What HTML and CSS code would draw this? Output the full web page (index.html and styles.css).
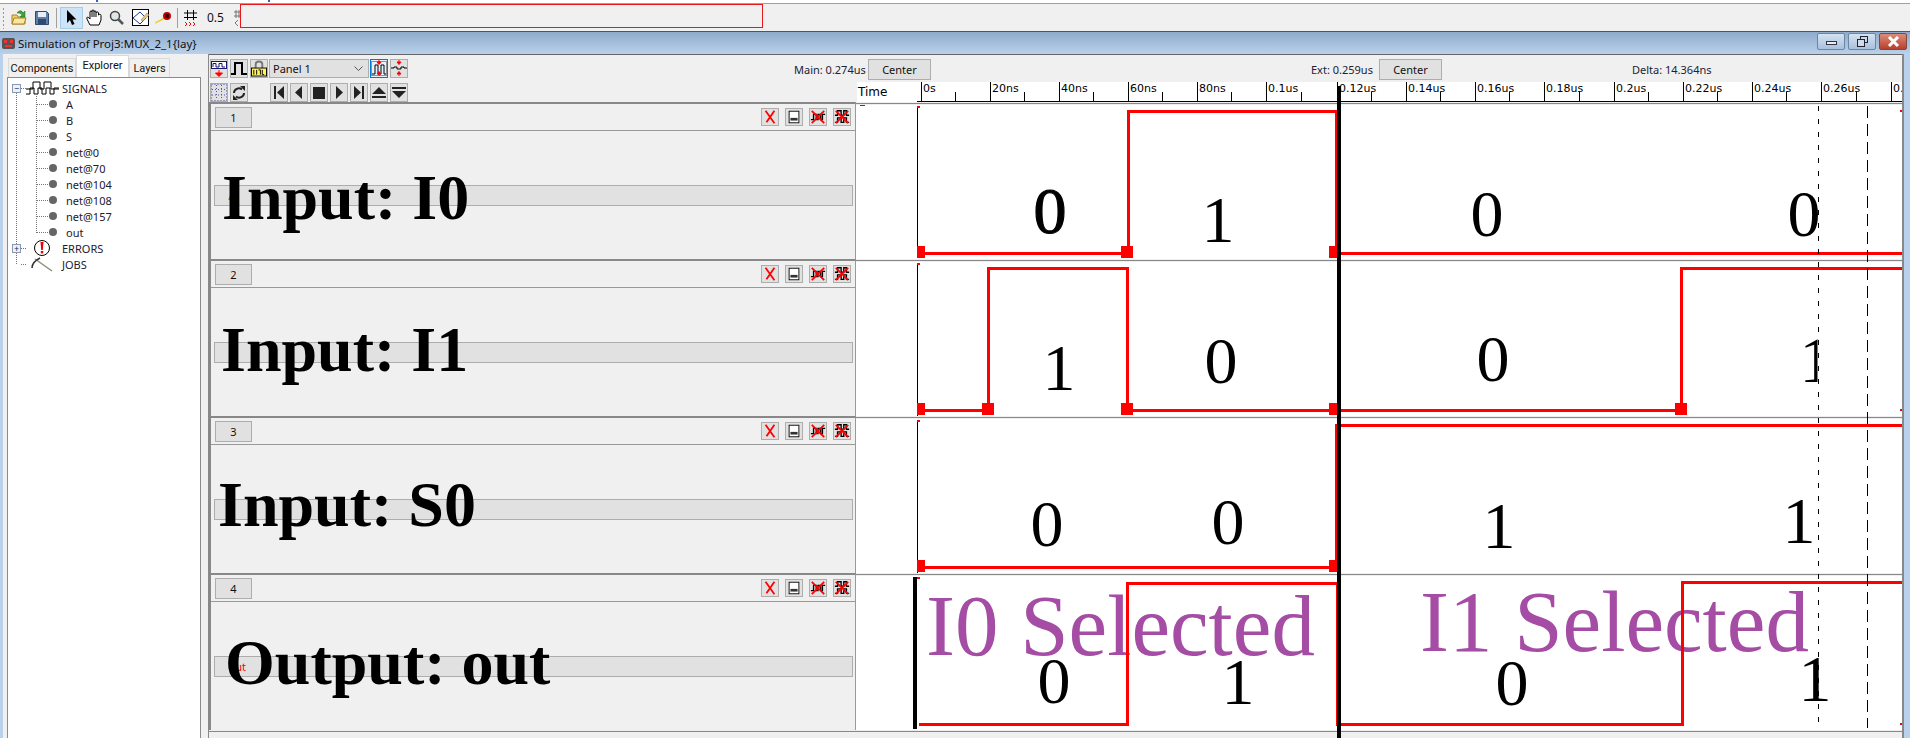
FILE: index.html
```html
<!DOCTYPE html>
<html lang="en">
<head>
    <meta charset="UTF-8">
    <title>Simulation of Proj3:MUX_2_1{lay}</title>
    <link rel="stylesheet" href="styles.css">
</head>
<body>
    <svg class="defs" width="0" height="0">
        <symbol id="i-close" viewBox="0 0 18 18">
            <path d="M4 2L14 16M14 2L5 15" fill="none" stroke="#f00" stroke-width="2"/>
        </symbol>
        <symbol id="i-min" viewBox="0 0 18 18">
            <rect x="3.500" y="2.500" width="11" height="13" fill="#fff" stroke="#000"/>
            <rect x="5" y="10" width="8" height="3" fill="#333"/>
        </symbol>
        <symbol id="i-hide" viewBox="0 0 18 18">
            <path d="M1 12H4V6H7V12H9V6H12V12H14V6H17" fill="none" stroke="#000" stroke-width="1.500"/>
            <path d="M2 2L16 16M16 2L2 16" fill="none" stroke="#f00" stroke-width="2"/>
        </symbol>
        <symbol id="i-hideall" viewBox="0 0 18 18">
            <path d="M1 7H4V2H8V7H11V2H14V7H17M1 15H4V10H8V15H11V10H14V15H17" fill="none" stroke="#000" stroke-width="1.500"/>
            <path d="M2 2L16 16M16 2L2 16" fill="none" stroke="#f00" stroke-width="2"/>
        </symbol>
    </svg>

    <div class="topstrip"><i></i><i></i></div>

    <div class="toolbar">
        <span class="gripper"></span>
        <svg class="t-open" width="16" height="17" viewBox="0 0 16 17">
            <path d="M1 6H6L7 8H14V15H1Z" fill="#f3d26b" stroke="#a8832c"/>
            <path d="M1 15L3 9H15L13 15Z" fill="#fbe79b" stroke="#a8832c"/>
            <path d="M6 4C8 1 11 1 12 4L14 2V8H9L11 6C10 4 8 4 6 4Z" fill="#3aa535" stroke="#1c6e1c" stroke-width=".5"/>
        </svg>
        <svg class="t-save" width="14" height="15" viewBox="0 0 14 15">
            <path d="M.5 1.500H11.500L13.500 3.500V14.500H.5Z" fill="#5f7fa6" stroke="#2f4a70"/>
            <rect x="3" y="2" width="8" height="5" fill="#e8eef5"/>
            <rect x="3" y="9" width="8" height="5" fill="#2f4a70"/>
        </svg>
        <span class="sep t-sep1"></span>
        <span class="t-arrow">
            <svg width="11" height="16" viewBox="0 0 11 16">
                <path d="M1 0V13L4 10L6 15L8.500 14L6.500 9.500H10.500Z"/>
            </svg>
        </span>
        <svg class="t-hand" width="16" height="17" viewBox="0 0 16 17">
            <path d="M4 16L1 10C0 8 2 7.500 3 9L4 10V3C4 1.500 6 1.500 6 3V2C6 .5 8 .5 8 2V3C8 1.500 10 1.500 10 3V4C10 2.500 12.500 2.500 12.500 4V6C13 5 15 5 15 6.500V11L13 16Z" fill="#fff" stroke="#000"/>
            <path d="M6 3V8M8 3V8M10 4V8" stroke="#000"/>
        </svg>
        <svg class="t-zoom" width="15" height="15" viewBox="0 0 15 15">
            <circle cx="6" cy="6" r="4.500" fill="#dfe6ea" stroke="#444" stroke-width="1.500"/>
            <path d="M9.500 9.500L14 14" stroke="#555" stroke-width="2.500"/>
        </svg>
        <svg class="t-area" width="17" height="17" viewBox="0 0 17 17">
            <rect x=".5" y=".5" width="16" height="16" fill="#fff" stroke="#000"/>
            <path d="M1 9L8 3L14 9L8 15Z" fill="none" stroke="#1a3a9a"/>
            <path d="M9 11L15 4L17 6L11 12Z" fill="#e8c98a" stroke="#8a6a2c" stroke-width=".5"/>
        </svg>
        <svg class="t-probe" width="17" height="13" viewBox="0 0 17 13">
            <path d="M0 12L10 7" stroke="#e6d230" stroke-width="1.500"/>
            <circle cx="12" cy="5" r="4" fill="#c00"/>
            <circle cx="12" cy="5" r="2.200" fill="#300"/>
        </svg>
        <span class="sep t-sep2"></span>
        <svg class="t-grid" width="13" height="16" viewBox="0 0 13 16">
            <path d="M3.500 0V10M9.500 0V10M0 3H13M0 7.500H13" stroke="#000"/>
            <path d="M1 12L3 14L1 16M5 12L7 14L5 16M9 12L11 14L9 16" fill="none" stroke="#f00"/>
        </svg>
        <span class="t-scale">0.5</span>
        <svg class="t-mini" width="6" height="16" viewBox="0 0 6 16">
            <path d="M2 0V8M5 0V8M0 2H6M0 6H6" stroke="#777"/>
            <path d="M4 10L1 13L4 16" fill="none" stroke="#777"/>
        </svg>
        <div class="red-box"></div>
    </div>

    <div class="window">
        <div class="titlebar">
            <svg class="app-icon" width="13" height="11" viewBox="0 0 13 11">
                <rect width="13" height="11" rx="2" fill="#555"/>
                <rect x="2" y="2" width="3" height="3" fill="#e33"/>
                <rect x="8" y="2" width="3" height="3" fill="#e33"/>
                <rect x="3" y="7" width="7" height="2" fill="#e33"/>
            </svg>
            <span class="title-text">Simulation of Proj3:MUX_2_1{lay}</span>
            <div class="win-buttons">
                <span class="win-btn"><i class="glyph-min"></i></span>
                <span class="win-btn">
                    <svg width="11" height="11" viewBox="0 0 11 11">
                        <rect x="3.500" y=".5" width="7" height="6" fill="none" stroke="#223"/>
                        <rect x=".5" y="3.500" width="7" height="7" fill="#cfdbea" stroke="#223"/>
                    </svg>
                </span>
                <span class="win-btn win-close">
                    <svg width="13" height="11" viewBox="0 0 13 11">
                        <path d="M2 1L11 10M11 1L2 10" stroke="#fff" stroke-width="3"/>
                    </svg>
                </span>
            </div>
        </div>

        <div class="window-body">
            <div class="sidepanel">
                <div class="tabs">
                    <span class="tab tab-components">Components</span>
                    <span class="tab tab-explorer active">Explorer</span>
                    <span class="tab tab-layers">Layers</span>
                </div>
                <div class="tree">
                    <span class="trunk"></span>
                    <span class="branch"></span>
                    <div class="node root">
                        <span class="expander">&minus;</span>
                        <span class="stub"></span>
                        <svg class="wave-icon" width="33" height="14" viewBox="0 0 33 14">
                            <path d="M0 8H7V1H14V8H18V1H25V8H33M0 13H4V7H8V13H12V7H16V13H20V7H24V13H28V7H33" fill="none" stroke="#000"/>
                        </svg>
                        <span>SIGNALS</span>
                    </div>
                    <div class="node leaf"><span class="stub"></span><span class="dot"></span><span>A</span></div>
                    <div class="node leaf"><span class="stub"></span><span class="dot"></span><span>B</span></div>
                    <div class="node leaf"><span class="stub"></span><span class="dot"></span><span>S</span></div>
                    <div class="node leaf"><span class="stub"></span><span class="dot"></span><span>net@0</span></div>
                    <div class="node leaf"><span class="stub"></span><span class="dot"></span><span>net@70</span></div>
                    <div class="node leaf"><span class="stub"></span><span class="dot"></span><span>net@104</span></div>
                    <div class="node leaf"><span class="stub"></span><span class="dot"></span><span>net@108</span></div>
                    <div class="node leaf"><span class="stub"></span><span class="dot"></span><span>net@157</span></div>
                    <div class="node leaf"><span class="stub"></span><span class="dot"></span><span>out</span></div>
                    <div class="node root">
                        <span class="expander">+</span>
                        <span class="stub"></span>
                        <svg class="errors-icon" width="33" height="16" viewBox="0 0 33 16">
                            <circle cx="16" cy="8" r="7.500" fill="#fff" stroke="#000"/>
                            <path d="M14.500 2H17.500L16.800 10H15.200Z" fill="#e00"/>
                            <rect x="14.800" y="11" width="2.400" height="2.400" fill="#e00"/>
                        </svg>
                        <span>ERRORS</span>
                    </div>
                    <div class="node root">
                        <span class="expander blank"></span>
                        <span class="stub"></span>
                        <svg class="errors-icon" width="33" height="15" viewBox="0 0 33 15">
                            <path d="M9 2L26 14" stroke="#8a8f78" stroke-width="1.500"/>
                            <path d="M6 11C6 7 10 3 14 1" fill="none" stroke="#333" stroke-width="1.500"/>
                        </svg>
                        <span>JOBS</span>
                    </div>
                </div>
            </div>

            <div class="wavewin">
                <div class="ctl-row ctl-top">
                    <span class="tbtn">
                        <svg width="16" height="17" viewBox="0 0 16 17">
                            <rect x=".5" y="1.500" width="15" height="7" fill="#fff" stroke="#14147a"/>
                            <path d="M2 7V3.500H5V7H8V3.500H11V7H14" fill="none" stroke="#14147a"/>
                            <path d="M8 10V13M4.500 13H11.500L8 16.500Z" fill="#f00" stroke="#f00"/>
                        </svg>
                    </span>
                    <span class="tbtn">
                        <svg width="16" height="15" viewBox="0 0 16 15">
                            <path d="M0 13H4V2H11V13H16" fill="none" stroke="#000" stroke-width="2"/>
                        </svg>
                    </span>
                    <span class="tbtn">
                        <svg width="17" height="17" viewBox="0 0 17 17">
                            <path d="M5 8V4C5 0 12 0 12 4V8" fill="none" stroke="#777" stroke-width="2"/>
                            <rect x=".5" y="8" width="16" height="8.500" fill="#fff25a" stroke="#000"/>
                            <path d="M3 10V15M6 10V15M8 10H10V15M12 10V15H14" fill="none" stroke="#000"/>
                        </svg>
                    </span>
                    <span class="panel-select">Panel 1
                        <svg width="9" height="5" viewBox="0 0 9 5"><path d="M.5 .5L4.500 4.500L8.500 .5" fill="none" stroke="#555"/></svg>
                    </span>
                    <span class="tbtn selected">
                        <svg width="16" height="17" viewBox="0 0 16 17">
                            <rect x=".5" y="1.500" width="15" height="14" fill="none" stroke="#333" stroke-dasharray="1 1"/>
                            <path d="M1 14H4V5H7V14H10V5H13V14H15" fill="none" stroke="#000"/>
                            <path d="M8 0V2M6 2H10L8 4.500ZM8 16V14M6 14H10L8 11.500Z" fill="#f00" stroke="#f00"/>
                        </svg>
                    </span>
                    <span class="tbtn">
                        <svg width="16" height="17" viewBox="0 0 16 17">
                            <path d="M0 8H3V7H6V9H10V7H13V8H16" fill="none" stroke="#000"/>
                            <path d="M8 0V2M6 2H10L8 4.500ZM8 16V14M6 14H10L8 11.500Z" fill="#f00" stroke="#f00"/>
                        </svg>
                    </span>

                    <span class="readout readout-main">Main: 0.274us</span>
                    <span class="center-btn">Center</span>
                    <span class="readout readout-ext">Ext: 0.259us</span>
                    <span class="center-btn">Center</span>
                    <span class="readout readout-delta">Delta: 14.364ns</span>
                </div>

                <div class="ctl-row ctl-bottom">
                    <div class="ctl-buttons">
                        <span class="tbtn">
                            <svg width="16" height="17" viewBox="0 0 16 17">
                                <path d="M.5 .5H15.500V16.500H.5ZM5.500 1V16M10.500 1V16M1 5.500H15M1 11H15" fill="none" stroke="#3030a0" stroke-width=".8" stroke-dasharray="1 2"/>
                            </svg>
                        </span>
                        <span class="tbtn">
                            <svg width="14" height="14" viewBox="0 0 14 14">
                                <path d="M2 7C2 3 7 1 10 3.500M12 7C12 11 7 13 4 10.500" fill="none" stroke="#222" stroke-width="2"/>
                                <path d="M8 0H13V5ZM6 14H1V9Z" fill="#222"/>
                            </svg>
                        </span>
                        <span class="tbtn t-first">
                            <svg width="12" height="13" viewBox="0 0 12 13"><path d="M1 0H3V13H1ZM11 0V13L4 6.500Z" fill="#222"/></svg>
                        </span>
                        <span class="tbtn">
                            <svg width="12" height="13" viewBox="0 0 12 13"><path d="M9 0V13L2 6.500Z" fill="#222"/></svg>
                        </span>
                        <span class="tbtn">
                            <svg width="12" height="12" viewBox="0 0 12 12"><rect width="12" height="12" fill="#222"/></svg>
                        </span>
                        <span class="tbtn">
                            <svg width="12" height="13" viewBox="0 0 12 13"><path d="M3 0V13L10 6.500Z" fill="#222"/></svg>
                        </span>
                        <span class="tbtn">
                            <svg width="12" height="13" viewBox="0 0 12 13"><path d="M9 0H11V13H9ZM1 0V13L8 6.500Z" fill="#222"/></svg>
                        </span>
                        <span class="tbtn">
                            <svg width="14" height="11" viewBox="0 0 14 11"><path d="M7 0L14 7H0ZM0 9H14V11H0Z" fill="#222"/></svg>
                        </span>
                        <span class="tbtn">
                            <svg width="14" height="11" viewBox="0 0 14 11"><path d="M7 11L14 4H0ZM0 0H14V2H0Z" fill="#222"/></svg>
                        </span>
                    </div>
                    <svg class="ruler" width="1045" height="20" viewBox="857 82 1045 20">
                        <text class="ruler-time" x="858" y="96">Time</text>
                        <path class="ruler-ticks" d="M917 101.500H1902M921.500 82V101M990.500 82V101M1059.500 82V101M1128.500 82V101M1197.500 82V101M1266.500 82V101M1337.500 82V101M1406.500 82V101M1475.500 82V101M1544.500 82V101M1614.500 82V101M1683.500 82V101M1752.500 82V101M1821.500 82V101M1891.500 82V101M955.500 92V101M1024.500 92V101M1093.500 92V101M1162.500 92V101M1231.500 92V101M1301.500 92V101M1371.500 92V101M1440.500 92V101M1509.500 92V101M1579.500 92V101M1648.500 92V101M1717.500 92V101M1786.500 92V101M1856.500 92V101"/>
                        <text x="923" y="92">0s</text>
                        <text x="992" y="92">20ns</text>
                        <text x="1061" y="92">40ns</text>
                        <text x="1130" y="92">60ns</text>
                        <text x="1199" y="92">80ns</text>
                        <text x="1268" y="92">0.1us</text>
                        <text x="1339" y="92">0.12us</text>
                        <text x="1408" y="92">0.14us</text>
                        <text x="1477" y="92">0.16us</text>
                        <text x="1546" y="92">0.18us</text>
                        <text x="1616" y="92">0.2us</text>
                        <text x="1685" y="92">0.22us</text>
                        <text x="1754" y="92">0.24us</text>
                        <text x="1823" y="92">0.26us</text>
                        <text x="1893" y="92">0.28us</text>
                    </svg>
                </div>

                <!-- panel 1 -->
                <div class="row">
                    <div class="row-head">
                        <div class="head-bar">
                            <span class="num-btn">1</span>
                            <div class="head-icons">
                                <svg class="hicon" width="18" height="18"><use href="#i-close"/></svg>
                                <svg class="hicon" width="18" height="18"><use href="#i-min"/></svg>
                                <svg class="hicon" width="18" height="18"><use href="#i-hide"/></svg>
                                <svg class="hicon" width="18" height="18"><use href="#i-hideall"/></svg>
                            </div>
                        </div>
                        <div class="head-body">
                            <div class="sig-bar">A</div>
                            <div class="big-label big-1">Input: I0</div>
                        </div>
                    </div>
                    <div class="row-wave">
                        <svg class="wave" width="1046" height="154" viewBox="856 105 1046 154">
                            <rect class="axis" x="917" y="106" width="1" height="152"/>
                            <rect class="red" x="917" y="106" width="3" height="2"/>
                            <rect class="axis-tick" x="860" y="105" width="5" height="1"/>
                            <path class="trace" d="M921 253H1128V111H1336V253M1336 253H1902"/>
                            <rect class="red" x="917" y="246" width="8" height="12"/>
                            <rect class="red" x="1121" y="246" width="12" height="12"/>
                            <rect class="red" x="1329" y="246" width="12" height="12"/>
                            <rect class="red" x="1900" y="110" width="2" height="2"/>
                            <text class="val val-double" x="1050" y="233">0</text>
                            <text class="val" x="1218" y="242">1</text>
                            <text class="val" x="1487" y="236">0</text>
                            <text class="val" x="1804" y="236">0</text>
                        </svg>
                    </div>
                </div>

                <!-- panel 2 -->
                <div class="row">
                    <div class="row-head">
                        <div class="head-bar">
                            <span class="num-btn">2</span>
                            <div class="head-icons">
                                <svg class="hicon" width="18" height="18"><use href="#i-close"/></svg>
                                <svg class="hicon" width="18" height="18"><use href="#i-min"/></svg>
                                <svg class="hicon" width="18" height="18"><use href="#i-hide"/></svg>
                                <svg class="hicon" width="18" height="18"><use href="#i-hideall"/></svg>
                            </div>
                        </div>
                        <div class="head-body">
                            <div class="sig-bar">B</div>
                            <div class="big-label big-2">Input: I1</div>
                        </div>
                    </div>
                    <div class="row-wave">
                        <svg class="wave" width="1046" height="154" viewBox="856 262 1046 154">
                            <rect class="axis" x="917" y="263" width="1" height="153"/>
                            <rect class="red" x="917" y="263" width="3" height="2"/>
                            <path class="trace" d="M921 410H988V268H1127V410H1681V268H1902"/>
                            <rect class="red" x="917" y="403" width="8" height="12"/>
                            <rect class="red" x="982" y="403" width="12" height="12"/>
                            <rect class="red" x="1121" y="403" width="12" height="12"/>
                            <rect class="red" x="1329" y="403" width="12" height="12"/>
                            <rect class="red" x="1675" y="403" width="12" height="12"/>
                            <rect class="red" x="1900" y="409" width="2" height="2"/>
                            <text class="val" x="1059" y="390">1</text>
                            <text class="val" x="1221" y="383">0</text>
                            <text class="val" x="1493" y="381">0</text>
                            <text class="val val-cut" x="1816" y="382">1</text>
                        </svg>
                    </div>
                </div>

                <!-- panel 3 -->
                <div class="row">
                    <div class="row-head">
                        <div class="head-bar">
                            <span class="num-btn">3</span>
                            <div class="head-icons">
                                <svg class="hicon" width="18" height="18"><use href="#i-close"/></svg>
                                <svg class="hicon" width="18" height="18"><use href="#i-min"/></svg>
                                <svg class="hicon" width="18" height="18"><use href="#i-hide"/></svg>
                                <svg class="hicon" width="18" height="18"><use href="#i-hideall"/></svg>
                            </div>
                        </div>
                        <div class="head-body">
                            <div class="sig-bar">S</div>
                            <div class="big-label big-3">Input: S0</div>
                        </div>
                    </div>
                    <div class="row-wave">
                        <svg class="wave" width="1046" height="154" viewBox="856 419 1046 154">
                            <rect class="axis" x="917" y="420" width="1" height="153"/>
                            <rect class="red" x="917" y="420" width="3" height="2"/>
                            <path class="trace" d="M921 567H1336V425H1902"/>
                            <rect class="red" x="917" y="560" width="8" height="12"/>
                            <rect class="red" x="1329" y="560" width="12" height="12"/>
                            <text class="val" x="1047" y="546">0</text>
                            <text class="val" x="1228" y="544">0</text>
                            <text class="val" x="1499" y="548">1</text>
                            <text class="val" x="1799" y="543">1</text>
                        </svg>
                    </div>
                </div>

                <!-- panel 4 -->
                <div class="row">
                    <div class="row-head">
                        <div class="head-bar">
                            <span class="num-btn">4</span>
                            <div class="head-icons">
                                <svg class="hicon" width="18" height="18"><use href="#i-close"/></svg>
                                <svg class="hicon" width="18" height="18"><use href="#i-min"/></svg>
                                <svg class="hicon" width="18" height="18"><use href="#i-hide"/></svg>
                                <svg class="hicon" width="18" height="18"><use href="#i-hideall"/></svg>
                            </div>
                        </div>
                        <div class="head-body">
                            <div class="sig-bar">out</div>
                            <div class="big-label big-4">Output: out</div>
                        </div>
                    </div>
                    <div class="row-wave">
                        <svg class="wave" width="1046" height="154" viewBox="856 576 1046 154">
                            <rect class="axis" x="913" y="577" width="4" height="152"/>
                            <rect class="red" x="917" y="577" width="3" height="2"/>
                            <text class="note" x="926" y="655">I0 Selected</text>
                            <text class="note" x="1420" y="651">I1 Selected</text>
                            <path class="trace" d="M919 724H1127V583H1337V724H1682V582H1902"/>
                            <rect class="red" x="1900" y="723" width="2" height="2"/>
                            <text class="val" x="1054" y="703">0</text>
                            <text class="val" x="1238" y="704">1</text>
                            <text class="val" x="1512" y="705">0</text>
                            <text class="val" x="1815" y="701">1</text>
                        </svg>
                    </div>
                </div>

                <div class="rows-end"></div>

                <!-- cursors run across all the panels -->
                <svg class="cursors" width="1046" height="684" viewBox="856 54 1046 684">
                    <rect x="1337" y="86" width="4" height="652"/>
                    <path class="cursor-ext" d="M1818.500 106V728"/>
                    <path class="cursor-main" d="M1867.500 106V728"/>
                </svg>
            </div>
        </div>
    </div>
</body>
</html>
```

FILE: styles.css
```css
/* Basic Reset */
* {
    margin: 0;
    padding: 0;
    box-sizing: border-box;
}

body {
    width: 1910px;
    height: 738px;
    overflow: hidden;
    display: flex;
    flex-direction: column;
    background-color: #f0f0f0;
    color: #111;
    font-family: "Noto Sans", sans-serif;
    font-size: 11px;
}

.defs {
    position: absolute;
}

/* Top strip */
.topstrip {
    height: 4px;
    flex: none;
    display: flex;
    background-color: #fff;
    border-bottom: 1px solid #a0a0a0;
}

.topstrip i {
    width: 2px;
    height: 2px;
    margin-left: 96px;
    background-color: #3a5fc8;
}

.topstrip i + i {
    margin-left: 170px;
}

/* Main toolbar */
.toolbar {
    position: relative;
    height: 27px;
    flex: none;
    display: flex;
    align-items: center;
    padding-left: 2px;
    background-color: #f0f0f0;
}

.gripper {
    width: 3px;
    height: 22px;
    background-image: radial-gradient(#999 40%, transparent 45%);
    background-size: 3px 4px;
}

.sep {
    width: 1px;
    height: 20px;
    background-color: #a0a0a0;
}

.t-open { margin-left: 6px; }
.t-save { margin-left: 8px; }
.t-sep1 { margin-left: 7px; }
.t-hand { margin-left: 3px; }
.t-zoom { margin-left: 7px; }
.t-area { margin-left: 8px; }
.t-probe { margin-left: 6px; }
.t-sep2 { margin-left: 5px; }
.t-grid { margin-left: 6px; }
.t-mini { margin-left: 10px; }

.t-arrow {
    width: 23px;
    height: 22px;
    margin-left: 3px;
    display: flex;
    align-items: center;
    justify-content: center;
    background-color: #cce4f7;
    border: 1px solid #a5cde8;
}

.t-scale {
    width: 17px;
    margin-left: 10px;
    font-size: 12px;
}

.red-box {
    position: absolute;
    left: 240px;
    top: 0;
    width: 523px;
    height: 24px;
    border: 1px solid #e8191c;
    background-color: #f0f0f0;
}

/* Window frame */
.window {
    flex: 1;
    min-height: 0;
    display: flex;
    flex-direction: column;
    background-color: #b9d1ea;
}

.titlebar {
    height: 23px;
    flex: none;
    display: flex;
    align-items: center;
    padding: 0 3px 0 2px;
    border-top: 1px solid #555;
    background: linear-gradient(to bottom, #8fabcc, #b9d1ea);
}

.title-text {
    margin-left: 3px;
    font-size: 11.500px;
}

.win-buttons {
    margin-left: auto;
    margin-bottom: 3px;
    display: flex;
    gap: 3px;
}

.win-btn {
    width: 28px;
    height: 17px;
    display: flex;
    align-items: center;
    justify-content: center;
    border: 1px solid #6b85a3;
    border-radius: 2px;
    background: linear-gradient(to bottom, #d5e2f0, #a9c1dc);
}

.win-close {
    background: linear-gradient(to bottom, #dc8c7a, #b8402c);
    border-color: #7d4a42;
}

.glyph-min {
    width: 11px;
    height: 4px;
    margin-top: 3px;
    background-color: #e8eef5;
    border: 1px solid #334;
}

.window-body {
    flex: 1;
    min-height: 0;
    display: flex;
    margin: 0 6px 0 3px;
    background-color: #f0f0f0;
}

/* Explorer side panel */
.sidepanel {
    width: 205px;
    flex: none;
    display: flex;
    flex-direction: column;
    padding-left: 4px;
}

.tabs {
    height: 23px;
    flex: none;
    display: flex;
    align-items: flex-end;
    padding-left: 1px;
    font-family: Roboto, sans-serif;
}

.tab {
    height: 19px;
    padding-top: 3px;
    text-align: center;
    background-color: #f0f0f0;
    border: 1px solid #d9d9d9;
    border-bottom: none;
    white-space: nowrap;
}

.tab-components { width: 68px; }
.tab-explorer { width: 53px; }
.tab-layers { width: 41px; }

.tab.active {
    height: 22px;
    padding-top: 3px;
    background-color: #fff;
}

.tree {
    position: relative;
    flex: 1;
    width: 194px;
    padding-top: 2px;
    background-color: #fff;
    border: 1px solid #8a8a8a;
    border-bottom: none;
}

.trunk {
    position: absolute;
    left: 8px;
    top: 14px;
    height: 172px;
    border-left: 1px dotted #777;
}

.branch {
    position: absolute;
    left: 28px;
    top: 18px;
    height: 137px;
    border-left: 1px dotted #777;
}

.node {
    height: 16px;
    display: flex;
    align-items: center;
    color: #1a2030;
    white-space: nowrap;
}

.root {
    padding-left: 4px;
}

.expander {
    position: relative;
    width: 9px;
    height: 9px;
    display: flex;
    align-items: center;
    justify-content: center;
    background-color: #eef2f8;
    border: 1px solid #8a9ab0;
    color: #203060;
    font-size: 9px;
    line-height: 1;
}

.expander.blank {
    visibility: hidden;
}

.root .stub {
    width: 5px;
    margin-left: 0;
}

.stub {
    border-top: 1px dotted #777;
}

.wave-icon {
    margin-right: 3px;
}

.errors-icon {
    margin-right: 3px;
}

.leaf {
    padding-left: 28px;
}

.leaf .stub {
    width: 12px;
}

.dot {
    width: 8px;
    height: 8px;
    margin: 0 9px 0 1px;
    border-radius: 50%;
    background-color: #666;
}

/* Waveform window */
.wavewin {
    position: relative;
    width: 1696px;
    flex: none;
    border-left: 1px solid #888;
    border-right: 2px solid #888;
}

.ctl-row {
    display: flex;
}

.ctl-top {
    height: 28px;
    padding: 4px 0 0 1px;
    border-top: 1px solid #666;
}

.ctl-bottom {
    height: 20px;
}

.ctl-buttons {
    width: 648px;
    display: flex;
    align-items: flex-start;
    gap: 2px;
    padding: 1px 0 0 1px;
}

.t-first {
    margin-left: 20px;
}

.tbtn {
    width: 18px;
    height: 19px;
    flex: none;
    margin-right: 2px;
    display: flex;
    align-items: center;
    justify-content: center;
    background-color: #e1e1e1;
    border: 1px solid #adadad;
}

.ctl-buttons .tbtn {
    margin-right: 0;
}

.tbtn.selected {
    background-color: #e5f1fb;
    border-color: #0078d7;
}

.panel-select {
    width: 100px;
    height: 19px;
    flex: none;
    margin: 0 1px 0 -1px;
    display: flex;
    align-items: center;
    justify-content: space-between;
    padding: 0 5px 0 3px;
    background-color: #e1e1e1;
    border: 1px solid #adadad;
}

.readout {
    height: 21px;
    flex: none;
    display: flex;
    align-items: center;
    white-space: nowrap;
    color: #223;
}

.readout-main {
    width: 74px;
    margin-left: 384px;
}

.readout-ext {
    width: 68px;
    margin-left: 380px;
}

.readout-delta {
    margin-left: 190px;
}

.center-btn {
    width: 63px;
    height: 21px;
    flex: none;
    display: flex;
    align-items: center;
    justify-content: center;
    background-color: #e1e1e1;
    border: 1px solid #adadad;
}

.ruler {
    display: block;
    background-color: #fff;
    font-family: "DejaVu Sans", sans-serif;
    font-size: 11px;
}

.ruler-time {
    font-size: 12px;
}

.ruler-ticks {
    fill: none;
    stroke: #000;
    stroke-width: 1;
}

/* Panels */
.row {
    height: 157px;
    display: flex;
}

.row-head {
    width: 647px;
    flex: none;
    display: flex;
    flex-direction: column;
    border-top: 2px solid #888;
    border-left: 2px solid #888;
    border-right: 1px solid #999;
}

.head-bar {
    height: 27px;
    flex: none;
    display: flex;
    align-items: center;
    justify-content: space-between;
    padding: 0 4px 0 4px;
    border-bottom: 1px solid #999;
}

.num-btn {
    width: 37px;
    height: 21px;
    display: flex;
    align-items: center;
    justify-content: center;
    background-color: #e1e1e1;
    border: 1px solid #adadad;
}

.head-icons {
    display: flex;
    gap: 6px;
}

.hicon {
    display: block;
    background-color: #e1e1e1;
    border: 1px solid #adadad;
}

.head-body {
    position: relative;
    flex: 1;
    display: flex;
    align-items: center;
    justify-content: center;
}

.sig-bar {
    width: 639px;
    height: 21px;
    display: flex;
    align-items: center;
    padding-left: 14px;
    background-color: #e1e1e1;
    border: 1px solid #adadad;
    color: #f00;
}

/* big labels sit on top of the signal bars */
.big-label {
    position: absolute;
    font-family: "Liberation Serif", serif;
    font-size: 64px;
    font-weight: bold;
    line-height: 64px;
    color: #000;
    white-space: nowrap;
}

.big-1 { left: 11px; top: 35px; }
.big-2 { left: 10px; top: 30px; }
.big-3 { left: 7px; top: 28px; }
.big-4 { left: 14px; top: 29px; }

.row-wave {
    flex: 1;
    height: 157px;
    padding-top: 3px;
    background: linear-gradient(to bottom, #eee 0, #eee 1px, #888 1px, #888 2px, #eee 2px, #eee 3px, #fff 3px);
}

.wave {
    display: block;
}

.axis {
    fill: #000;
}

.axis-tick {
    fill: #444;
}

.red {
    fill: #f00;
}

.trace {
    fill: none;
    stroke: #f00;
    stroke-width: 3;
    shape-rendering: crispEdges;
}

.val {
    font-family: "Liberation Serif", serif;
    font-size: 66px;
    text-anchor: middle;
    fill: #000;
}

.val-double {
    stroke: #000;
    stroke-width: 1.200;
}

.val-cut {
    clip-path: inset(0 15px 0 0);
}

.note {
    font-family: "Liberation Serif", serif;
    font-size: 87px;
    fill: #a54ca5;
}

.rows-end {
    height: 2px;
    border-top: 1px solid #eee;
    border-bottom: 1px solid #888;
}

/* Cursors lie over every panel */
.cursors {
    position: absolute;
    left: 647px;
    top: 0;
    pointer-events: none;
}

.cursor-ext,
.cursor-main {
    fill: none;
    stroke: #000;
    stroke-width: 1;
}

.cursor-ext {
    stroke-dasharray: 5 8;
}

.cursor-main {
    stroke-dasharray: 12 6;
}
```
